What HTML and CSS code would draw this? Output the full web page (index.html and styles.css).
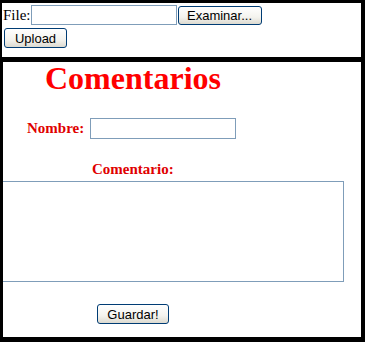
FILE: index.html
```html
<!DOCTYPE html>
<html lang="es">
<head>
    <meta charset="UTF-8">
    <title>Comentarios</title>
    <link rel="stylesheet" href="styles.css">
</head>
<body>
    <!-- Upload frame -->
    <div class="frame top">
        <div class="file-row">
            <span class="file-label">File:</span>
            <input type="text" class="file-box">
            <button class="btn browse">Examinar...</button>
        </div>
        <button class="btn upload">Upload</button>
    </div>

    <!-- Comments frame -->
    <div class="frame bottom">
        <h1>Comentarios</h1>
        <div class="name-row">
            <label class="red-label">Nombre:</label>
            <input type="text" class="name-box">
        </div>
        <div class="red-label comment-label">Comentario:</div>
        <textarea class="comment-box"></textarea>
        <button class="btn save">Guardar!</button>
    </div>
</body>
</html>
```

FILE: styles.css
```css
html, body {
    height: 100%;
}

body {
    margin: 0;
    padding: 3px 4px 5px 2px;
    box-sizing: border-box;
    background-color: #000;
    display: flex;
    flex-direction: column;
    gap: 5px;
    font-family: 'Liberation Serif', serif;
}

.frame {
    background-color: #fff;
}

.top {
    height: 54px;
    flex: none;
    padding-left: 1px;
}

.bottom {
    flex: 1;
    margin-left: 1px;
}

.file-row {
    display: flex;
    align-items: center;
    height: 20px;
    margin-top: 2px;
}

.file-label {
    font-size: 15px;
    line-height: 18px;
}

.file-box, .name-box, .comment-box {
    border: 1px solid #7f9db9;
    background: #fff;
    padding: 0;
    margin: 0;
    box-sizing: border-box;
    font-family: 'Liberation Sans', sans-serif;
}

.file-box {
    width: 146px;
    height: 20px;
}

.btn {
    font-family: 'Liberation Sans', Arial, sans-serif;
    font-size: 13px;
    color: #000;
    border: 1px solid #003c74;
    border-radius: 3px;
    background: linear-gradient(#ffffff, #f4f3ee 60%, #dcdad0);
    box-sizing: border-box;
    padding: 0;
    cursor: pointer;
}

.browse {
    width: 84px;
    height: 19px;
    margin-left: 1px;
}

.upload {
    display: block;
    width: 63px;
    height: 20px;
    margin: 3px 0 0 1px;
}

h1 {
    margin: 0;
    padding-left: 42px;
    font-size: 32px;
    line-height: 32px;
    color: #ff0000;
}

.red-label {
    font-size: 15px;
    font-weight: bold;
    line-height: 17px;
    color: #e00000;
}

.name-row {
    display: flex;
    align-items: center;
    margin-top: 24px;
    padding-left: 24px;
    gap: 6px;
}

.name-box {
    width: 146px;
    height: 21px;
}

.comment-label {
    margin-top: 22px;
    padding-left: 89px;
}

.comment-box {
    display: block;
    width: 341px;
    height: 101px;
    margin-top: 3px;
    border-left: none;
    resize: none;
}

.save {
    display: block;
    width: 72px;
    height: 20px;
    margin: 22px 0 0 94px;
}
```
